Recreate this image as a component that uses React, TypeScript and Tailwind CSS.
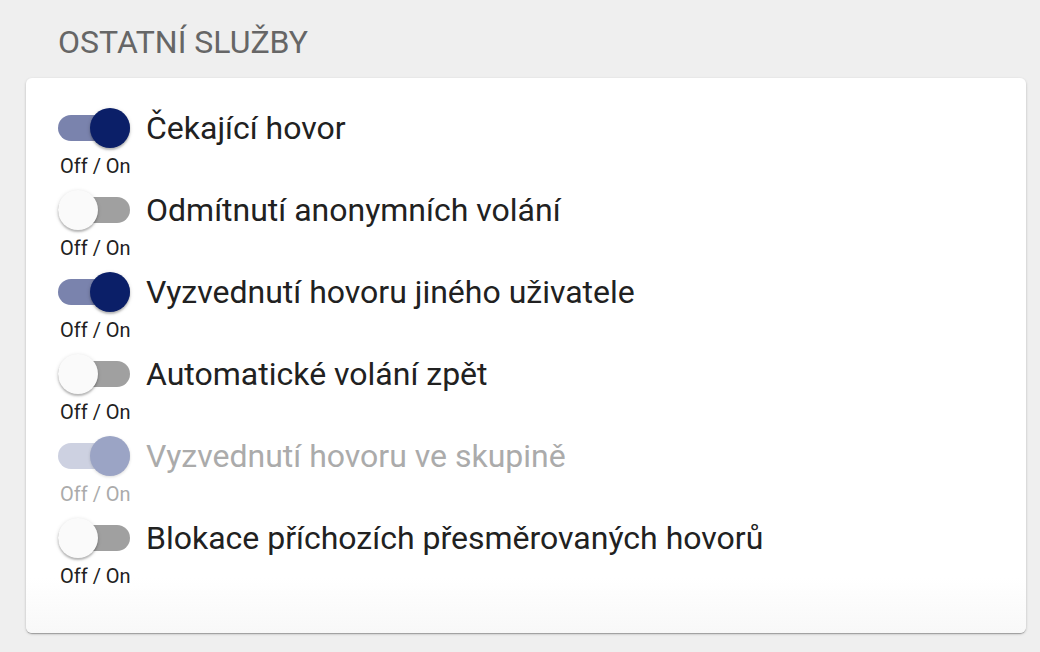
import { useState } from 'react'

interface Service {
  id: string
  label: string
  on: boolean
  disabled?: boolean
}

const initialServices: Service[] = [
  { id: 'call-waiting', label: 'Čekající hovor', on: true },
  { id: 'anon-reject', label: 'Odmítnutí anonymních volání', on: false },
  { id: 'pickup-other', label: 'Vyzvednutí hovoru jiného uživatele', on: true },
  { id: 'auto-callback', label: 'Automatické volání zpět', on: false },
  { id: 'group-pickup', label: 'Vyzvednutí hovoru ve skupině', on: true, disabled: true },
  { id: 'block-forwarded', label: 'Blokace příchozích přesměrovaných hovorů', on: false },
]

function Toggle({ on, disabled, onChange }: { on: boolean; disabled?: boolean; onChange: () => void }) {
  const track = disabled
    ? on ? 'bg-[#cdd1e1]' : 'bg-[#d6d6d6]'
    : on ? 'bg-[#7a83ad]' : 'bg-[#a0a0a0]'
  const thumb = disabled
    ? on ? 'bg-[#9ba4c5]' : 'bg-[#f2f2f2]'
    : on ? 'bg-[#0b1f68]' : 'bg-[#fafafa]'

  return (
    <button
      role="switch"
      aria-checked={on}
      disabled={disabled}
      onClick={onChange}
      className={`relative flex items-center w-[72px] h-[40px] shrink-0 ${on ? 'justify-end' : 'justify-start'}`}
    >
      <span className={`absolute left-0 right-0 top-[7px] h-[26px] rounded-full ${track}`} />
      <span
        className={`relative w-[40px] h-[40px] rounded-full ${thumb} ${
          disabled ? 'shadow-[0_1px_3px_rgba(0,0,0,0.15)]' : 'shadow-[0_2px_2px_rgba(0,0,0,0.22),0_1px_4px_rgba(0,0,0,0.14)]'
        }`}
      />
    </button>
  )
}

export default function App() {
  const [services, setServices] = useState(initialServices)

  const toggle = (id: string) =>
    setServices((list) => list.map((s) => (s.id === id ? { ...s, on: !s.on } : s)))

  return (
    <div
      className="min-h-[652px] bg-[#efefef] pl-[26px] pr-[14px] pt-[24px]"
      style={{ fontFamily: 'Roboto, "Noto Sans", sans-serif' }}
    >
      <h2 className="pl-[32px] text-[32px] leading-[36px] text-[#666666] uppercase mb-[18px]">Ostatní služby</h2>

      <div className="rounded-[6px] bg-gradient-to-b from-white from-90% to-[#f8f8f8] shadow-[0_1px_3px_rgba(0,0,0,0.2),0_1px_1px_rgba(0,0,0,0.14),0_2px_1px_-1px_rgba(0,0,0,0.12)] pl-[32px] pt-[30px] pb-[45px]">
        {services.map((s) => (
          <div key={s.id} className="flex flex-col pb-[12px] last:pb-0">
            <div className="flex items-center gap-[16px] h-[40px]">
              <Toggle on={s.on} disabled={s.disabled} onChange={() => toggle(s.id)} />
              <span className={`text-[32px] leading-[40px] ${s.disabled ? 'text-[#ababab]' : 'text-[#212121]'}`}>
                {s.label}
              </span>
            </div>
            <span className={`mt-[6px] pl-[2px] text-[20px] leading-[24px] ${s.disabled ? 'text-[#ababab]' : 'text-[#212121]'}`}>
              Off / On
            </span>
          </div>
        ))}
      </div>
    </div>
  )
}
